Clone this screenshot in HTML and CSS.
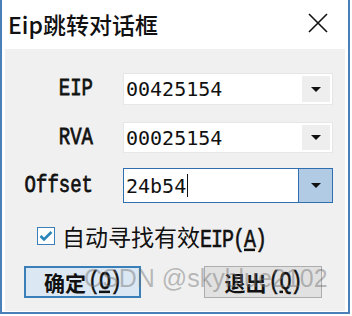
FILE: index.html
```html
<!DOCTYPE html>
<html>
<head>
<meta charset="utf-8">
<link rel="stylesheet" href="styles.css">
</head>
<body>
<div class="window">
  <div class="titlebar">
    <span class="title">Eip跳转对话框</span>
    <svg class="close" width="20" height="20" viewBox="0 0 20 20"><path d="M1 1 L19 19 M19 1 L1 19" stroke="#111" stroke-width="1.6" fill="none"/></svg>
  </div>
  <div class="client">
    <div class="row r1">
      <span class="label"><span class="lt">EIP</span></span>
      <div class="combo"><span class="val">00425154</span><span class="btn"><i class="arrow"></i></span></div>
    </div>
    <div class="row r2">
      <span class="label"><span class="lt">RVA</span></span>
      <div class="combo"><span class="val">00025154</span><span class="btn"><i class="arrow"></i></span></div>
    </div>
    <div class="row r3">
      <span class="label"><span class="lt">Offset</span></span>
      <div class="combo focus"><span class="val">24b54<span class="caret"></span></span><span class="btn"><i class="arrow"></i></span></div>
    </div>
    <div class="check-row">
      <span class="checkbox"><svg width="14" height="12" viewBox="0 0 14 12"><path d="M1.5 6 L5 9.5 L12.5 2" stroke="#2a86b8" stroke-width="2.6" fill="none"/></svg></span>
      <span class="check-text">自动寻找有效<span class="asc">EIP(<u>A</u>)</span></span>
    </div>
    <div class="buttons">
      <button class="pbtn primary">确定<span class="asc">(<u>O</u>)</span></button>
      <button class="pbtn">退出<span class="asc">(<u>Q</u>)</span></button>
    </div>
  </div>
  <div class="watermark">CSDN @skyblue2102</div>
</div>
</body>
</html>
```

FILE: styles.css
```css
html, body {
  margin: 0;
  padding: 0;
  background: #ffffff;
  width: 352px;
  height: 316px;
  overflow: hidden;
}
.window {
  position: relative;
  width: 346px;
  height: 312px;
  border: 2px solid #4a7fb8;
  border-top: none;
  background: #ffffff;
  display: flex;
  flex-direction: column;
}
.titlebar {
  height: 49px;
  display: flex;
  align-items: center;
  justify-content: space-between;
  padding: 0 20px 0 6px;
  flex: none;
}
.title {
  font-family: "Noto Sans CJK SC", sans-serif;
  font-size: 23px;
  font-weight: 500;
  color: #111;
  margin-top: -2px;
}
.close { display: block; margin-top: -4px; }
.client {
  flex: 1;
  margin: 0 3px 1px 3px;
  background: #f0f0f0;
  padding-top: 24px;
  display: flex;
  flex-direction: column;
}
.row {
  display: flex;
  align-items: center;
}
.r1 { height: 32px; }
.r2 { height: 31px; margin-top: 17px; }
.r3 { height: 35px; margin-top: 15px; }
.label {
  width: 88px;
  text-align: right;
  flex: none;
}
.lt {
  display: inline-block;
  font-family: "Liberation Mono", "Courier New", monospace;
  font-size: 19px;
  color: #111;
  -webkit-text-stroke: 0.6px #111;
  transform: scaleY(1.3);
}
.combo {
  margin-left: 30px;
  width: 210px;
  height: 100%;
  box-sizing: border-box;
  background: #fff;
  border: 1px solid #e6e6e6;
  display: flex;
  align-items: center;
  justify-content: space-between;
  padding: 2px;
}
.val {
  font-family: "DejaVu Sans Mono", monospace;
  font-size: 20px;
  color: #111;
  display: flex;
  align-items: center;
}
.btn {
  width: 28px;
  height: 100%;
  background: #eeeeee;
  display: flex;
  align-items: center;
  justify-content: center;
}
.arrow {
  width: 0;
  height: 0;
  border-left: 5px solid transparent;
  border-right: 5px solid transparent;
  border-top: 5px solid #111;
}
.combo.focus {
  border: 1px solid #2f6fb0;
  padding: 0;
}
.combo.focus .val { padding-left: 2px; }
.combo.focus .btn {
  width: 33px;
  background: #b1cbe5;
  border-left: 1px solid #2f6fb0;
}
.caret {
  display: inline-block;
  width: 1px;
  height: 23px;
  background: #111;
  margin-left: 1px;
}
.check-row {
  margin-top: 17px;
  height: 32px;
  display: flex;
  align-items: center;
  padding-left: 32px;
}
.checkbox {
  width: 18px;
  height: 18px;
  box-sizing: border-box;
  border: 1px solid #3b7fb8;
  background: #fff;
  display: flex;
  align-items: center;
  justify-content: center;
  margin-right: 7px;
}
.check-text {
  font-family: "Noto Sans CJK SC", sans-serif;
  font-size: 23px;
  color: #111;
}
.asc {
  display: inline-block;
  font-family: "Liberation Mono", "Courier New", monospace;
  font-size: 20px;
  letter-spacing: -1px;
  -webkit-text-stroke: 0.5px #111;
  transform: scaleY(1.25);
}
.buttons {
  margin-top: 14px;
  display: flex;
  gap: 63px;
  padding-left: 19px;
}
.pbtn {
  width: 118px;
  height: 32px;
  box-sizing: border-box;
  border: 1px solid #adadad;
  background: #e1e1e1;
  font-family: "Noto Sans CJK SC", sans-serif;
  font-size: 21px;
  font-weight: bold;
  color: #111;
  padding: 0;
  display: flex;
  align-items: center;
  justify-content: center;
}
.pbtn .asc { font-weight: normal; margin-left: 2px; }
.pbtn.primary {
  width: 117px;
  border: 2px solid #3b7fb8;
  background: #dbe8f4;
}
.watermark {
  position: absolute;
  left: 82px;
  top: 264px;
  font-family: "Liberation Sans", sans-serif;
  font-size: 25px;
  color: rgba(110, 110, 110, 0.45);
  white-space: nowrap;
  pointer-events: none;
}
```
